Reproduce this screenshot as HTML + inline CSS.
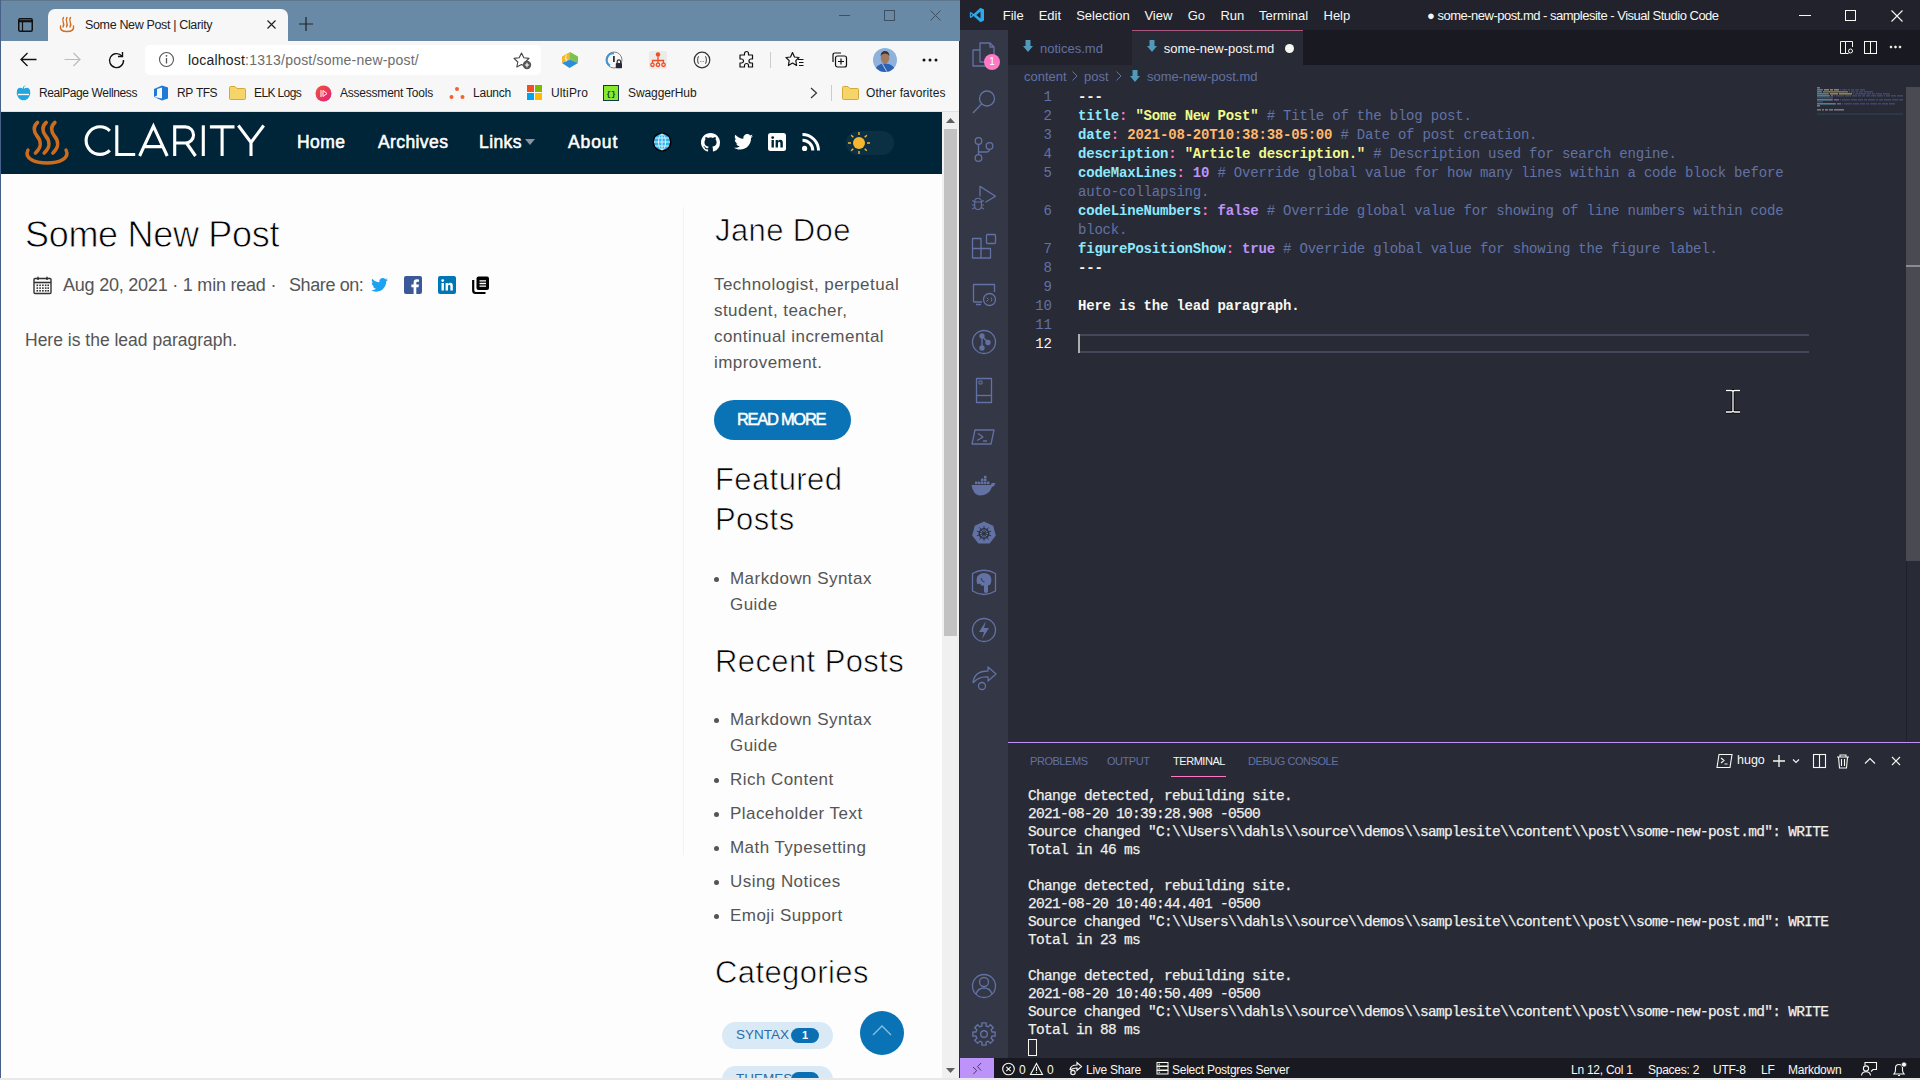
<!DOCTYPE html>
<html><head><meta charset="utf-8">
<style>
*{margin:0;padding:0;box-sizing:border-box}
html,body{width:1920px;height:1080px;overflow:hidden;background:#fff}
body{position:relative;font-family:"Liberation Sans",sans-serif}
.a{position:absolute;white-space:nowrap}
svg{position:absolute;overflow:visible}
/* EDGE */
#edge{position:absolute;left:0;top:0;width:960px;height:1080px;background:#f7f7f7;overflow:hidden}
#etitle{position:absolute;left:0;top:0;width:960px;height:41px;background:#688aa6;border-top:1px solid #5f7589}
#etab{position:absolute;left:48px;top:9px;width:240px;height:32px;background:#f7f7f7;border-radius:7px 7px 0 0}
#addr{position:absolute;left:145px;top:45px;width:396px;height:30px;background:#fff;border-radius:5px}
.bm{position:absolute;top:85px;font-size:12px;color:#1b1b1b;height:16px;line-height:16px}
#page{position:absolute;left:1px;top:112px;width:941px;height:966px;background:#fdfdfd;overflow:hidden}
#hdr{position:absolute;left:0;top:0;width:941px;height:62px;background:#002538}
.nav{position:absolute;top:20px;font-size:17.5px;font-weight:normal;color:#fff;letter-spacing:0.4px;-webkit-text-stroke:0.55px #fff}
#sb{position:absolute;left:942px;top:112px;width:17px;height:966px;background:#f0f0f0}
/* VSCODE */
#vs{position:absolute;left:960px;top:0;width:960px;height:1080px;background:#282a36;overflow:hidden}
#vtitle{position:absolute;left:0;top:0;width:960px;height:30px;background:#21222c}
.menu{position:absolute;top:8px;font-size:13px;color:#f8f8f2}
#act{position:absolute;left:0;top:30px;width:48px;height:1028px;background:#343746}
#tabs{position:absolute;left:48px;top:30px;width:912px;height:35px;background:#191a21}
.mono{font-family:"Liberation Mono",monospace}
#code{font-size:14px;letter-spacing:-0.2px;line-height:19px;font-weight:bold;color:#f8f8f2}
#lnum{text-align:right;font-size:14px;line-height:19px;color:#6272a4}
#panel{position:absolute;left:48px;top:742px;width:912px;height:316px;background:#282a36;border-top:1px solid #bd93f9}
#term{font-size:14.5px;letter-spacing:-0.7px;line-height:18px;color:#f0f0ea;font-weight:normal;-webkit-text-stroke:0.25px #f0f0ea}
#status{position:absolute;left:0;top:1058px;width:960px;height:20px;background:#191a21}
.st{position:absolute;top:3px;font-size:12px;color:#f8f8f2;letter-spacing:-0.25px}
#taskline{position:absolute;left:0;top:1078px;width:1920px;height:2px;background:#e8e8e8}

.k{color:#8be9fd}.p{color:#ff79c6}.s{color:#f1fa8c}.o{color:#ffb86c}.n{color:#bd93f9}.c{color:#6272a4;font-weight:normal}.w{color:#f8f8f2}
.pt{font-size:11px;color:#6272a4;letter-spacing:-0.45px}

.sh{font-size:31px;color:#000;line-height:36px;letter-spacing:0.4px;-webkit-text-stroke:0.7px #fdfdfd}
.sbt{font-size:17px;color:#555;line-height:26px;letter-spacing:0.45px}
.li{position:relative;padding-left:16px;margin-bottom:8px}
.bul{position:absolute;left:0px;top:11px;width:5px;height:5px;border-radius:3px;background:#555}
</style></head><body>


<div id="edge">
  <div id="etitle"></div>
  <div class="a" style="left:0;top:0;width:1px;height:1080px;background:#46608a"></div>
  <!-- tab actions icon -->
  <svg style="left:18px;top:18px" width="15" height="14" viewBox="0 0 15 14"><rect x="0.75" y="0.75" width="13.5" height="12.5" rx="1.5" fill="none" stroke="#111" stroke-width="1.5"/><path d="M0.75 3.2 H14.25" stroke="#111" stroke-width="2.2"/><path d="M4.5 3 V13" stroke="#111" stroke-width="1.2"/></svg>
  <div id="etab"></div>
  <!-- favicon steam -->
  <svg style="left:58px;top:16px" width="18" height="18" viewBox="0 0 18 18" fill="none" stroke="#cf6d22" stroke-width="1.4" stroke-linecap="round">
    <path d="M5.5 1.5 Q4 3.5 5.2 6 Q6.4 8.5 5 11"/><path d="M9 1.5 Q7.5 3.5 8.7 6 Q9.9 8.5 8.5 11"/><path d="M12.5 1.5 Q11 3.5 12.2 6 Q13.4 8.5 12 11"/>
    <path d="M2.5 10 Q1.5 15.5 9 15.5 Q16.5 15.5 15.5 10"/>
  </svg>
  <div class="a" id="tabt" style="left:85px;top:18px;font-size:12.5px;letter-spacing:-0.35px;color:#222">Some New Post | Clarity</div>
  <svg style="left:267px;top:20px" width="9" height="9" viewBox="0 0 9 9"><path d="M0.5 0.5 L8.5 8.5 M8.5 0.5 L0.5 8.5" stroke="#222" stroke-width="1.2"/></svg>
  <svg style="left:299px;top:17px" width="14" height="14" viewBox="0 0 14 14"><path d="M7 0 V14 M0 7 H14" stroke="#222" stroke-width="1.2"/></svg>
  <!-- window controls -->
  <div class="a" style="left:839px;top:15px;width:11px;height:1px;background:#3d4f60"></div>
  <div class="a" style="left:884px;top:10px;width:11px;height:11px;border:1px solid #3d4f60"></div>
  <svg style="left:930px;top:10px" width="11" height="11" viewBox="0 0 11 11"><path d="M0.5 0.5 L10.5 10.5 M10.5 0.5 L0.5 10.5" stroke="#3d4f60" stroke-width="1"/></svg>

  <!-- toolbar -->
  <svg style="left:20px;top:52px" width="17" height="15" viewBox="0 0 17 15"><path d="M16.5 7.5 H1.5 M7.5 1 L1 7.5 L7.5 14" stroke="#111" stroke-width="1.3" fill="none"/></svg>
  <svg style="left:64px;top:52px" width="17" height="15" viewBox="0 0 17 15"><path d="M0.5 7.5 H15.5 M9.5 1 L16 7.5 L9.5 14" stroke="#bbb" stroke-width="1.2" fill="none"/></svg>
  <svg style="left:108px;top:51px" width="17" height="17" viewBox="0 0 17 17"><path d="M13.8 5 A7 7 0 1 0 15.5 9" stroke="#111" stroke-width="1.4" fill="none"/><path d="M14.5 1 V5.5 H10" stroke="#111" stroke-width="1.4" fill="none"/></svg>
  <div id="addr"></div>
  <svg style="left:158px;top:51px" width="17" height="17" viewBox="0 0 17 17"><circle cx="8.5" cy="8.5" r="7" fill="none" stroke="#555" stroke-width="1.1"/><path d="M8.5 7 V12.5" stroke="#555" stroke-width="1.3"/><circle cx="8.5" cy="4.8" r="0.9" fill="#555"/></svg>
  <div class="a" id="url" style="left:188px;top:52px;font-size:14px;letter-spacing:0.2px;color:#222">localhost<span style="color:#6d6d6d">:1313/post/some-new-post/</span></div>
  <svg style="left:513px;top:52px" width="20" height="18" viewBox="0 0 20 18"><path d="M8.5 1 L10.8 5.8 L16 6.4 L12.2 10 L13.2 15 L8.5 12.5 L3.8 15 L4.8 10 L1 6.4 L6.2 5.8 Z" fill="none" stroke="#444" stroke-width="1.1" stroke-linejoin="round"/><circle cx="14" cy="13" r="4.2" fill="#555"/><path d="M14 10.8 V15.2 M11.8 13 H16.2" stroke="#fff" stroke-width="1.1"/></svg>
  <!-- extension icons -->
  <svg style="left:561px;top:51px" width="18" height="18" viewBox="0 0 18 18"><path d="M9 1 L1 5.5 V12 L9 8.5 Z" fill="#f2b727"/><path d="M9 1 L17 5.5 V12 L9 8.5 Z" fill="#7cc24a"/><path d="M1 12 L9 8.5 L17 12 L8.5 17 Z" fill="#2b8fd6"/><path d="M5.5 4 L4 8 H6 L5 10.5" stroke="#fff" stroke-width="0.8" fill="none"/></svg>
  <svg style="left:605px;top:51px" width="18" height="18" viewBox="0 0 18 18"><circle cx="9" cy="9" r="8" fill="none" stroke="#777" stroke-width="0.9"/><path d="M9 2.5 A6.5 6.5 0 0 0 5 14.5" fill="none" stroke="#3b95dc" stroke-width="1.8"/><rect x="8" y="5" width="1.8" height="6" fill="#333"/><rect x="10.8" y="12" width="6.2" height="5.2" rx="0.8" fill="#2a2a35"/><path d="M12.2 12 V10.6 A1.7 1.7 0 0 1 15.6 10.6 V12" stroke="#2a2a35" fill="none" stroke-width="1.2"/></svg>
  <svg style="left:649px;top:51px" width="18" height="18" viewBox="0 0 18 18" fill="none" stroke="#f04e23" stroke-width="1.3"><rect x="0" y="0" width="18" height="18" rx="2" fill="#ebebeb" stroke="none"/><circle cx="9" cy="3.5" r="2.2" fill="#f04e23" stroke="none"/><path d="M9 5.5 V9 M3.5 12 V9.5 H14.5 V12 M9 9.5 V12"/><circle cx="3.5" cy="13.8" r="1.7"/><circle cx="9" cy="13.8" r="1.7"/><circle cx="14.5" cy="13.8" r="1.7"/></svg>
  <svg style="left:693px;top:51px" width="18" height="18" viewBox="0 0 18 18"><circle cx="9" cy="9" r="7.8" fill="none" stroke="#333" stroke-width="1.2"/><path d="M6 5.5 Q4.8 5.5 4.8 7 V8.2 Q4.8 9 4 9 Q4.8 9 4.8 9.8 V11 Q4.8 12.5 6 12.5 M12 5.5 Q13.2 5.5 13.2 7 V8.2 Q13.2 9 14 9 Q13.2 9 13.2 9.8 V11 Q13.2 12.5 12 12.5" fill="none" stroke="#333" stroke-width="0.9"/><path d="M7.3 10.5 H7.9 M8.7 10.5 H9.3 M10.1 10.5 H10.7" stroke="#555" stroke-width="0.9"/></svg>
  <svg style="left:738px;top:51px" width="18" height="18" viewBox="0 0 18 18"><path d="M6.5 2.5 A2 2 0 0 1 10.5 2.5 V4 H14.5 V8 H13 A2 2 0 0 0 13 12 H14.5 V16 H10.5 V14.5 A2 2 0 0 0 6.5 14.5 V16 H2 V12 H3.5 A2 2 0 0 0 3.5 8 H2 V4 H6.5 Z" fill="none" stroke="#111" stroke-width="1.2" stroke-linejoin="round"/></svg>
  <div class="a" style="left:770px;top:52px;width:1px;height:16px;background:#ccc"></div>
  <svg style="left:785px;top:51px" width="19" height="18" viewBox="0 0 19 18"><path d="M7.5 1.5 L9.5 6 L14 6.5 L10.8 9.6 L11.6 14.5 L7.5 12 L3.4 14.5 L4.2 9.6 L1 6.5 L5.5 6 Z" fill="none" stroke="#111" stroke-width="1.2" stroke-linejoin="round"/><path d="M13 8.5 H18.5 M14 11.5 H18.5 M14 14.5 H18.5" stroke="#111" stroke-width="1.1"/></svg>
  <svg style="left:830px;top:51px" width="18" height="18" viewBox="0 0 18 18" fill="none" stroke="#111" stroke-width="1.2"><path d="M3 11 V4 Q3 2 5 2 H11"/><rect x="5.5" y="5" width="11" height="11" rx="2"/><path d="M11 7.5 V13.5 M8 10.5 H14"/></svg>
  <svg style="left:873px;top:48px" width="24" height="24" viewBox="0 0 24 24"><defs><clipPath id="avc"><circle cx="12" cy="12" r="12"/></clipPath></defs><g clip-path="url(#avc)"><rect width="24" height="24" fill="#8eb2dc"/><ellipse cx="12" cy="10" rx="4.3" ry="5.5" fill="#a07a62"/><path d="M7.5 8 Q8 3 12 3 Q16 3 16.5 8 Q15 5.5 12 5.5 Q9 5.5 7.5 8 Z" fill="#3b3634"/><path d="M1 24 Q3 15.5 12 15.5 Q21 15.5 23 24 Z" fill="#2c62b4"/><path d="M9.5 16 L14 24" stroke="#d8e0ea" stroke-width="0.8"/></g></svg>
  <svg style="left:922px;top:58px" width="16" height="4" viewBox="0 0 16 4"><circle cx="2" cy="2" r="1.5" fill="#111"/><circle cx="8" cy="2" r="1.5" fill="#111"/><circle cx="14" cy="2" r="1.5" fill="#111"/></svg>

  <!-- bookmarks -->
  <svg style="left:16px;top:85px" width="15" height="16" viewBox="0 0 15 16"><path d="M7.5 4 Q3 1 1 5 Q0 9 2 12 Q4 16 7.5 15 Q11 16 13 12 Q15 9 14 5 Q12 1 7.5 4 Z" fill="#22a6e0"/><path d="M2 9.5 H13" stroke="#fff" stroke-width="1.3"/><path d="M7.5 4 Q7 1.5 9 0.5" stroke="#22a6e0" stroke-width="1" fill="none"/></svg>
  <div class="bm a" id="b0" style="letter-spacing:-0.38px;left:39px">RealPage Wellness</div>
  <svg style="left:153px;top:85px" width="16" height="16" viewBox="0 0 16 16"><path d="M1 4 L9 0.5 L15 2.5 V13.5 L9 15.5 L1 12 L9 13.5 V2.5 L4 4 V10.5 L1 12 Z" fill="#1e7ad6"/></svg>
  <div class="bm a" id="b1" style="left:177px;letter-spacing:-0.3px">RP</div><div class="bm a" style="left:196px;letter-spacing:-0.6px">TFS</div>
  <svg style="left:229px;top:86px" width="17" height="14" viewBox="0 0 17 14"><path d="M0.5 1.5 Q0.5 0.5 1.5 0.5 H6 L8 2.5 H15.5 Q16.5 2.5 16.5 3.5 V12.5 Q16.5 13.5 15.5 13.5 H1.5 Q0.5 13.5 0.5 12.5 Z" fill="#f5d46a" stroke="#d4a93a" stroke-width="1"/></svg>
  <div class="bm a" id="b2" style="letter-spacing:-0.62px;left:254px">ELK Logs</div>
  <svg style="left:315px;top:85px" width="17" height="17" viewBox="0 0 17 17"><defs><linearGradient id="gr1" x1="0" y1="0" x2="1" y2="1"><stop offset="0" stop-color="#f0553a"/><stop offset="1" stop-color="#e0207a"/></linearGradient></defs><circle cx="8.5" cy="8.5" r="8" fill="url(#gr1)"/><path d="M6 5 V12 M8 5.5 L12 8.5 L8 11.5 Z" stroke="#fff" fill="none" stroke-width="1"/></svg>
  <div class="bm a" id="b3" style="letter-spacing:-0.22px;left:340px">Assessment Tools</div>
  <svg style="left:449px;top:86px" width="16" height="14" viewBox="0 0 16 14"><circle cx="8" cy="3" r="2" fill="#f0622e"/><circle cx="2.5" cy="11" r="2" fill="#f0622e"/><circle cx="13.5" cy="11" r="2" fill="#f0622e"/></svg>
  <div class="bm a" id="b4" style="letter-spacing:-0.23px;left:473px">Launch</div>
  <svg style="left:527px;top:85px" width="15" height="15" viewBox="0 0 15 15"><rect x="0" y="0" width="7" height="7" fill="#f25022"/><rect x="8" y="0" width="7" height="7" fill="#7fba00"/><rect x="0" y="8" width="7" height="7" fill="#00a4ef"/><rect x="8" y="8" width="7" height="7" fill="#ffb900"/></svg>
  <div class="bm a" id="b5" style="letter-spacing:0.14px;left:551px">UltiPro</div>
  <svg style="left:603px;top:85px" width="16" height="16" viewBox="0 0 16 16"><rect x="0.5" y="0.5" width="15" height="15" fill="#85ea2d" stroke="#173647" stroke-width="1"/><text x="8" y="11" font-size="8" text-anchor="middle" fill="#173647" font-family="Liberation Mono" font-weight="bold">{}</text></svg>
  <div class="bm a" id="b6" style="letter-spacing:-0.09px;left:628px">SwaggerHub</div>
  <svg style="left:810px;top:87px" width="8" height="12" viewBox="0 0 8 12"><path d="M1 1 L6.5 6 L1 11" stroke="#333" stroke-width="1.2" fill="none"/></svg>
  <div class="a" style="left:831px;top:85px;width:1px;height:16px;background:#ccc"></div>
  <svg style="left:842px;top:86px" width="17" height="14" viewBox="0 0 17 14"><path d="M0.5 1.5 Q0.5 0.5 1.5 0.5 H6 L8 2.5 H15.5 Q16.5 2.5 16.5 3.5 V12.5 Q16.5 13.5 15.5 13.5 H1.5 Q0.5 13.5 0.5 12.5 Z" fill="#f5d46a" stroke="#d4a93a" stroke-width="1"/></svg>
  <div class="bm a" id="b7" style="letter-spacing:0.05px;left:866px">Other favorites</div>
  <div class="a" style="left:1px;top:111px;width:958px;height:1px;background:#e0e0e0"></div>

  
  <div id="page">
    <div id="hdr">
      <svg style="left:19px;top:4px" width="56" height="54" viewBox="0 0 56 54" fill="none" stroke="#cd6c1f" stroke-width="3.6" stroke-linecap="round">
        <path d="M17.5 6.5 C13 10 13.5 16 17 20 C21 24.5 22 31 15.5 37"/><path d="M26.2 6.5 C21.7 10 22.2 16 25.7 20 C29.7 24.5 30.7 31 24.2 37"/><path d="M34.9 6.5 C30.4 10 30.9 16 34.4 20 C38.4 24.5 39.4 31 32.9 37"/>
        <path d="M8 34 C4 42 14 47 27 47 C40 47 50 42 46 34" stroke-width="3.4"/>
      </svg>
      <svg style="left:-1px;top:-112px" width="300" height="180" viewBox="0 0 300 180" fill="none" stroke="#fff" stroke-width="3.1">
        <path d="M109.8 130.8 A 13.9 13.8 0 1 0 109.8 150.4"/>
        <path d="M116.8 125.3 V154.5 H135.2"/>
        <path d="M139.6 156 L153.4 126.2 L167.2 156 M144 146.6 H162.8"/>
        <path d="M174.7 156 V126.9 H185.5 A 8.05 8.05 0 0 1 185.5 143 H174.7 M186.5 143 L195.5 156"/>
        <path d="M203.3 125.3 V156"/>
        <path d="M209.9 126.9 H234.5 M222.1 126.9 V156"/>
        <path d="M238.3 125.5 L251 142.5 L263.7 125.5 M251 142.5 V156"/>
      </svg>
      <div class="nav" id="n1" style="left:296px">Home</div>
      <div class="nav" id="n2" style="left:377px">Archives</div>
      <div class="nav" id="n3" style="left:478px">Links</div>
      <svg style="left:524px;top:27px" width="10" height="6" viewBox="0 0 10 6"><path d="M0 0 H10 L5 6 Z" fill="#8a949c"/></svg>
      <div class="nav" id="n4" style="left:567px;letter-spacing:0.9px">About</div>
      <!-- globe -->
      <svg style="left:651px;top:20px" width="20" height="20" viewBox="0 0 20 20"><circle cx="10" cy="10" r="9.5" fill="#000"/><circle cx="10" cy="10" r="8" fill="#2fb5ee"/><g stroke="#e8f7ff" stroke-width="0.9" fill="none"><ellipse cx="10" cy="10" rx="3.5" ry="8"/><path d="M10 2 V18 M2 10 H18 M3 6 H17 M3 14 H17"/></g></svg>
      <!-- github -->
      <svg style="left:700px;top:21px" width="19" height="19" viewBox="0 0 16 16"><path fill="#fff" d="M8 0C3.58 0 0 3.58 0 8c0 3.54 2.29 6.53 5.47 7.59.4.07.55-.17.55-.38 0-.19-.01-.82-.01-1.49-2.01.37-2.53-.49-2.69-.94-.09-.23-.48-.94-.82-1.13-.28-.15-.68-.52-.01-.53.63-.01 1.08.58 1.23.82.72 1.21 1.87.87 2.33.66.07-.52.28-.87.51-1.07-1.78-.2-3.64-.89-3.640-3.95 0-.87.31-1.59.82-2.15-.08-.2-.36-1.02.08-2.12 0 0 .67-.21 2.2.82.64-.18 1.32-.27 2-.27.68 0 1.36.09 2 .27 1.53-1.04 2.2-.82 2.2-.82.44 1.1.16 1.92.08 2.12.51.56.82 1.27.82 2.15 0 3.07-1.87 3.75-3.65 3.95.29.25.54.73.54 1.48 0 1.07-.01 1.93-.01 2.2 0 .21.15.46.55.38A8.013 8.013 0 0016 8c0-4.42-3.58-8-8-8z"/></svg>
      <!-- twitter -->
      <svg style="left:733px;top:22px" width="19" height="16" viewBox="0 0 24 20"><path fill="#fff" d="M24 2.4c-.9.4-1.8.6-2.8.8 1-.6 1.8-1.6 2.2-2.7-1 .6-2 1-3.1 1.2C19.4.6 18.1 0 16.7 0c-2.7 0-4.9 2.2-4.9 4.9 0 .4 0 .8.1 1.1C7.8 5.8 4.1 3.9 1.7.9c-.4.7-.7 1.6-.7 2.5 0 1.7.9 3.2 2.2 4.1-.8 0-1.6-.2-2.2-.6v.1c0 2.4 1.7 4.4 3.9 4.8-.4.1-.8.2-1.3.2-.3 0-.6 0-.9-.1.6 2 2.4 3.4 4.6 3.4-1.7 1.3-3.8 2.1-6.1 2.1-.4 0-.8 0-1.2-.1 2.2 1.4 4.8 2.2 7.5 2.2 9.1 0 14-7.5 14-14v-.6c1-.7 1.8-1.6 2.5-2.5z"/></svg>
      <!-- linkedin -->
      <svg style="left:767px;top:21px" width="18" height="18" viewBox="0 0 18 18"><rect width="18" height="18" rx="2.5" fill="#fff"/><rect x="3.5" y="7" width="2.4" height="7.5" fill="#002538"/><circle cx="4.7" cy="4.6" r="1.4" fill="#002538"/><path d="M7.6 7 H9.9 V8.2 Q10.6 6.8 12.4 6.8 Q14.8 6.8 14.8 9.8 V14.5 H12.4 V10.3 Q12.4 8.8 11.2 8.8 Q10 8.8 10 10.3 V14.5 H7.6 Z" fill="#002538"/></svg>
      <!-- rss -->
      <svg style="left:801px;top:21px" width="18" height="18" viewBox="0 0 18 18"><circle cx="2.6" cy="15.4" r="2.6" fill="#fff"/><path d="M0.5 7.2 A10.3 10.3 0 0 1 10.8 17.5" stroke="#fff" stroke-width="3" fill="none"/><path d="M0.5 1.5 A16 16 0 0 1 16.5 17.5" stroke="#fff" stroke-width="3" fill="none"/></svg>
      <!-- toggle -->
      <div class="a" style="left:845px;top:19px;width:48px;height:24px;border-radius:12px;background:#0b3043"></div>
      <svg style="left:846px;top:19px" width="24" height="24" viewBox="0 0 24 24"><g stroke="#f5b730" stroke-width="1.4"><path d="M12 1 V4 M12 20 V23 M1 12 H4 M20 12 H23 M4.2 4.2 L6.3 6.3 M17.7 17.7 L19.8 19.8 M4.2 19.8 L6.3 17.7 M17.7 6.3 L19.8 4.2"/></g><circle cx="12" cy="12" r="6" fill="#f5b730"/></svg>
    </div>

    <!-- article -->
    <div class="a" id="ptitle" style="left:24px;top:102px;font-size:36px;letter-spacing:-0.3px;-webkit-text-stroke:0.8px #fdfdfd;color:#000">Some New Post</div>
    <svg style="left:32px;top:164px" width="19" height="19" viewBox="0 0 19 19"><rect x="1" y="2.5" width="17" height="15" rx="1" fill="none" stroke="#333" stroke-width="1.4"/><path d="M1 6.5 H18" stroke="#333" stroke-width="1.6"/><path d="M5 0.8 V4 M14 0.8 V4" stroke="#333" stroke-width="1.5"/><g fill="#333"><rect x="3.5" y="8.5" width="1.6" height="1.6"/><rect x="6.3" y="8.5" width="1.6" height="1.6"/><rect x="9.1" y="8.5" width="1.6" height="1.6"/><rect x="11.9" y="8.5" width="1.6" height="1.6"/><rect x="14.4" y="8.5" width="1.6" height="1.6"/><rect x="3.5" y="11.3" width="1.6" height="1.6"/><rect x="6.3" y="11.3" width="1.6" height="1.6"/><rect x="9.1" y="11.3" width="1.6" height="1.6"/><rect x="11.9" y="11.3" width="1.6" height="1.6"/><rect x="14.4" y="11.3" width="1.6" height="1.6"/><rect x="3.5" y="14" width="1.6" height="1.6"/><rect x="6.3" y="14" width="1.6" height="1.6"/><rect x="9.1" y="14" width="1.6" height="1.6"/><rect x="11.9" y="14" width="1.6" height="1.6"/><rect x="14.4" y="14" width="1.6" height="1.6"/></g></svg>
    <div class="a" id="meta" style="left:62px;top:163px;font-size:18px;letter-spacing:-0.22px;color:#555">Aug 20, 2021 · 1 min read ·</div>
    <div class="a" id="share" style="left:288px;top:163px;font-size:18px;letter-spacing:-0.4px;color:#555">Share on:</div>
    <svg style="left:370px;top:166px" width="17" height="14" viewBox="0 0 24 20"><path fill="#1da1f2" d="M24 2.4c-.9.4-1.8.6-2.8.8 1-.6 1.8-1.6 2.2-2.7-1 .6-2 1-3.1 1.2C19.4.6 18.1 0 16.7 0c-2.7 0-4.9 2.2-4.9 4.9 0 .4 0 .8.1 1.1C7.8 5.8 4.1 3.9 1.7.9c-.4.7-.7 1.6-.7 2.5 0 1.7.9 3.2 2.2 4.1-.8 0-1.6-.2-2.2-.6v.1c0 2.4 1.7 4.4 3.9 4.8-.4.1-.8.2-1.3.2-.3 0-.6 0-.9-.1.6 2 2.4 3.4 4.6 3.4-1.7 1.3-3.8 2.1-6.1 2.1-.4 0-.8 0-1.2-.1 2.2 1.4 4.8 2.2 7.5 2.2 9.1 0 14-7.5 14-14v-.6c1-.7 1.8-1.6 2.5-2.5z"/></svg>
    <svg style="left:403px;top:164px" width="18" height="18" viewBox="0 0 18 18"><rect width="18" height="18" rx="2" fill="#3b5998"/><path d="M12.3 18 V11.2 H14.5 L14.9 8.6 H12.3 V7 Q12.3 5.8 13.5 5.8 H15 V3.5 Q14 3.3 12.8 3.3 Q9.6 3.3 9.6 6.6 V8.6 H7.4 V11.2 H9.6 V18 Z" fill="#fff"/></svg>
    <svg style="left:437px;top:164px" width="18" height="18" viewBox="0 0 18 18"><rect width="18" height="18" rx="2" fill="#0077b5"/><rect x="3.5" y="7" width="2.4" height="7.5" fill="#fff"/><circle cx="4.7" cy="4.6" r="1.4" fill="#fff"/><path d="M7.6 7 H9.9 V8.2 Q10.6 6.8 12.4 6.8 Q14.8 6.8 14.8 9.8 V14.5 H12.4 V10.3 Q12.4 8.8 11.2 8.8 Q10 8.8 10 10.3 V14.5 H7.6 Z" fill="#fff"/></svg>
    <svg style="left:471px;top:164px" width="18" height="18" viewBox="0 0 18 18"><path d="M1.2 4 V14.5 Q1.2 17 3.7 17 H13.5" fill="none" stroke="#000" stroke-width="2.2"/><rect x="4.5" y="0.5" width="12.5" height="13.5" rx="2" fill="#000"/><path d="M7.5 4.8 H14 M7.5 7.5 H14 M7.5 10.2 H14" stroke="#fff" stroke-width="1.3"/></svg>
    <div class="a" id="lead" style="left:24px;top:218px;font-size:17.5px;color:#555">Here is the lead paragraph.</div>

    <!-- sidebar -->
    <div class="a" style="left:682px;top:95px;width:1px;height:648px;background:#f2f2f2"></div>
    <div class="a sh" id="jane" style="left:714px;top:101px">Jane Doe</div>
    <div class="a sbt" id="bio" style="left:713px;top:160px">Technologist, perpetual<br>student, teacher,<br>continual incremental<br>improvement.</div>
    <div class="a" style="left:713px;top:288px;width:137px;height:40px;border-radius:20px;background:#0a73b5"></div>
    <div class="a" id="readmore" style="left:736px;top:298px;font-size:16.5px;letter-spacing:-1.3px;font-weight:normal;-webkit-text-stroke:0.5px #fff;color:#fff">READ MORE</div>
    <div class="a sh" id="feat" style="left:714px;top:348px;line-height:40px">Featured<br>Posts</div>
    <div class="a sbt" style="left:713px;top:454px">
      <div class="li"><span class="bul"></span>Markdown Syntax<br>Guide</div>
    </div>
    <div class="a sh" id="recent" style="left:714px;top:532px">Recent Posts</div>
    <div class="a sbt" style="left:713px;top:595px">
      <div class="li"><span class="bul"></span>Markdown Syntax<br>Guide</div>
      <div class="li"><span class="bul"></span>Rich Content</div>
      <div class="li"><span class="bul"></span>Placeholder Text</div>
      <div class="li"><span class="bul"></span>Math Typesetting</div>
      <div class="li"><span class="bul"></span>Using Notices</div>
      <div class="li"><span class="bul"></span>Emoji Support</div>
    </div>
    <div class="a sh" id="cats" style="left:714px;top:843px">Categories</div>
    <div class="a" style="left:721px;top:910px;width:111px;height:27px;border-radius:14px;background:#d9eaf6"></div>
    <div class="a" id="syn" style="left:735px;top:915px;font-size:13.5px;color:#2a6ca8">SYNTAX</div>
    <div class="a" style="left:790px;top:916px;width:28px;height:15px;border-radius:8px;background:#0a70b3;color:#fff;font-size:11px;font-weight:bold;line-height:15px;text-align:center">1</div>
    <div class="a" style="left:721px;top:954px;width:111px;height:27px;border-radius:14px;background:#d9eaf6"></div>
    <div class="a" style="left:735px;top:959px;font-size:13.5px;color:#2a6ca8">THEMES</div>
    <div class="a" style="left:790px;top:960px;width:28px;height:15px;border-radius:8px;background:#0a70b3"></div>
    <!-- to top -->
    <div class="a" style="left:859px;top:899px;width:44px;height:44px;border-radius:22px;background:#0a73b5"></div>
    <svg style="left:871px;top:912px" width="20" height="12" viewBox="0 0 20 12"><path d="M1 11 L10 2 L19 11" stroke="#8cc0e3" stroke-width="1.3" fill="none"/></svg>
  </div>

  <div id="sb"></div>
  <div class="a" style="left:944px;top:129px;width:13px;height:507px;background:#c2c2c2"></div>
  <svg style="left:946px;top:118px" width="9" height="5" viewBox="0 0 9 5"><path d="M0 5 L4.5 0 L9 5 Z" fill="#606060"/></svg>
  <svg style="left:946px;top:1068px" width="9" height="5" viewBox="0 0 9 5"><path d="M0 0 L4.5 5 L9 0 Z" fill="#606060"/></svg>
  <div class="a" style="left:959px;top:41px;width:1px;height:1039px;background:#2a2b3a"></div>
</div>

<div id="vs">
  <div id="vtitle"></div>
  <!-- vscode logo -->
  <svg style="left:9px;top:7px" width="16" height="16" viewBox="0 0 16 16"><path d="M11.5 0.8 L15 2.4 V13.6 L11.5 15.2 L4.6 9 L1.9 11 L0.8 10.4 V5.6 L1.9 5 L4.6 7 Z M11.5 4.6 L7.3 8 L11.5 11.4 Z M1.9 6.6 V9.4 L3.4 8 Z" fill="#2ea8ec"/></svg>
  <div class="menu a" style="left:42.7px">File</div>
  <div class="menu a" style="left:78.7px">Edit</div>
  <div class="menu a" style="left:116.2px">Selection</div>
  <div class="menu a" style="left:184.4px">View</div>
  <div class="menu a" style="left:227.7px">Go</div>
  <div class="menu a" style="left:260.4px">Run</div>
  <div class="menu a" style="left:299px">Terminal</div>
  <div class="menu a" style="left:363.5px">Help</div>
  <div class="menu a" id="wtitle" style="left:467px;top:8px;letter-spacing:-0.5px">&#9679; some-new-post.md - samplesite - Visual Studio Code</div>
  <!-- window controls -->
  <div class="a" style="left:839px;top:15px;width:12px;height:1px;background:#f8f8f2"></div>
  <div class="a" style="left:885px;top:10px;width:11px;height:11px;border:1px solid #f8f8f2"></div>
  <svg style="left:931px;top:10px" width="12" height="12" viewBox="0 0 12 12"><path d="M0.5 0.5 L11.5 11.5 M11.5 0.5 L0.5 11.5" stroke="#f8f8f2" stroke-width="1.1"/></svg>

  <div id="act"></div>
  <svg id="acticons" style="left:0;top:0" width="48" height="1058" viewBox="0 0 48 1058" fill="none" stroke="#6272a4" stroke-width="1.3" stroke-linejoin="round">
    <!-- explorer -->
    <path d="M20 43 H30 L34 47 V62 H20 Z M30 43 V47 H34"/>
    <path d="M20 50 H13 V66 H26 V62"/>
    <!-- search -->
    <circle cx="27" cy="98.5" r="7.5"/><path d="M21.5 104 L13 113"/>
    <!-- scm -->
    <circle cx="18.5" cy="141" r="3.3"/><circle cx="29.5" cy="146" r="3.3"/><circle cx="18.5" cy="158" r="3.3"/>
    <path d="M18.5 144.3 V154.7 M29.5 149.3 Q29.5 152 26 152 H18.5"/>
    <!-- debug -->
    <path d="M20 196.4 V186.4 L35.5 196.2 L25.5 202.3"/>
    <path d="M14.7 202 Q14.7 198.2 18 198.2 Q21.4 198.2 21.4 202 V206 Q21.4 209.5 18 209.5 Q14.7 209.5 14.7 206 Z M14.7 202 H21.4 M12.3 200.5 L14.7 202 M23.8 200.5 L21.4 202 M12 205 H14.7 M21.4 205 H24 M12.3 209 L14.7 207.5 M23.8 209 L21.4 207.5" stroke-width="1.1"/>
    <!-- extensions -->
    <path d="M12.5 238.5 H21 V248.5 H30.5 V258 H12.5 Z M12.5 248.5 H21 V258"/>
    <rect x="26.5" y="234.5" width="9" height="9" rx="1"/>
    <!-- remote explorer -->
    <path d="M13.5 302 V284.5 H34.5 V292 M13.5 302 H22 M16 304.5 H21"/>
    <circle cx="29.5" cy="299.5" r="6"/>
    <path d="M26.5 297.5 L28.5 299.5 L26.5 301.5 M31 297.5 Q33 299.5 31 301.5" stroke-width="1"/>
    <!-- gitlens / pull request -->
    <circle cx="24" cy="342" r="11.5"/>
    <circle cx="22" cy="336" r="2" fill="#6272a4"/><circle cx="28" cy="342.5" r="2" fill="#6272a4"/><circle cx="22" cy="348" r="2" fill="#6272a4"/>
    <path d="M22 336 V348 M22 336 L28 342.5"/>
    <!-- database -->
    <rect x="16.5" y="378.5" width="15" height="24"/><path d="M16.5 395.5 H31.5"/><rect x="19" y="381" width="3" height="3" stroke-width="1"/>
    <!-- powershell -->
    <path d="M15 430 L34 430 L31 444 L12 444 Z M18 433.5 L23 437 L17 440.5 M23 441 H27"/>
    <!-- docker -->
    <path d="M11.5 485 H30.5 Q32 481.5 35.5 483.5 Q34.5 486.5 32 487 Q29 495.5 20 495.5 Q13 495 11.5 485 Z" fill="#6272a4" stroke="none"/>
    <g fill="#6272a4" stroke="none"><rect x="15" y="481.6" width="2.5" height="2.5"/><rect x="18" y="481.6" width="2.5" height="2.5"/><rect x="21" y="481.6" width="2.5" height="2.5"/><rect x="24" y="481.6" width="2.5" height="2.5"/><rect x="27" y="481.6" width="2.5" height="2.5"/><rect x="21" y="478.6" width="2.5" height="2.5"/><rect x="24" y="478.6" width="2.5" height="2.5"/><rect x="24" y="475.8" width="2.5" height="2.5"/></g>
    <!-- kubernetes -->
    <path d="M24 521.5 L33.2 525.8 L35.8 535.5 L29.6 543.5 H18.4 L12.2 535.5 L14.8 525.8 Z" fill="#6272a4" stroke="none"/>
    <circle cx="24" cy="533.5" r="4.8" stroke="#2a2c3a" stroke-width="1.3"/>
    <circle cx="24" cy="533.5" r="1.3" fill="#2a2c3a" stroke="none"/>
    <path d="M24 526 V541 M16.9 531.2 L31.1 535.8 M19.5 539.5 L28.5 527.5 M28.5 539.5 L19.5 527.5 M16.9 535.8 L31.1 531.2" stroke="#2a2c3a" stroke-width="0.9"/>
    <!-- postgres -->
    <path d="M12.5 573.5 Q24 567 35.5 573.5 V591 Q24 598 12.5 591 Z"/>
    <path d="M17 577 Q21 571.5 27 573.5 Q32.5 575.5 31 583 Q30 586 28 585 V592 Q26 594 24 592 V585.5 Q21 586.5 20 583.5 Q17 586 16.5 581 Z" fill="#6272a4" stroke="none"/>
    <path d="M21 578 Q22 582 24.5 582" stroke="#343746" stroke-width="1"/>
    <!-- azure functions -->
    <circle cx="24" cy="630" r="11.5"/>
    <path d="M26 621 L19 632 H24 L22 639 L29 628 H24 Z" fill="#6272a4" stroke="none"/>
    <!-- live share -->
    <path d="M13 683 Q14 671 28 671 V667 L36 674 L28 681 V677 Q19 676 13 683" />
    <circle cx="22" cy="686" r="3.5"/>
    <!-- accounts -->
    <circle cx="24" cy="986" r="11.5"/><circle cx="24" cy="982" r="4.5"/><path d="M16 994 Q18 988 24 988 Q30 988 32 994"/>
    <!-- settings gear -->
    <path d="M21.99 1025.95 L21.84 1022.91 L26.16 1022.91 L26.01 1025.95 L28.27 1026.89 L30.32 1024.63 L33.37 1027.68 L31.11 1029.73 L32.05 1031.99 L35.09 1031.84 L35.09 1036.16 L32.05 1036.01 L31.11 1038.27 L33.37 1040.32 L30.32 1043.37 L28.27 1041.11 L26.01 1042.05 L26.16 1045.09 L21.84 1045.09 L21.99 1042.05 L19.73 1041.11 L17.68 1043.37 L14.63 1040.32 L16.89 1038.27 L15.95 1036.01 L12.91 1036.16 L12.91 1031.84 L15.95 1031.99 L16.89 1029.73 L14.63 1027.68 L17.68 1024.63 L19.73 1026.89 Z" stroke-width="1.4"/>
    <circle cx="24" cy="1034" r="3.3" stroke-width="1.4"/>
  </svg>
  <div class="a" style="left:24px;top:54px;width:16px;height:16px;border-radius:8px;background:#ff79c6;color:#fff;font-size:10px;line-height:16px;text-align:center">1</div>

  <div id="tabs"></div>
  <div class="a" style="left:48px;top:30px;width:124px;height:35px;background:#21222c"></div>
  <div class="a" style="left:172px;top:30px;width:171px;height:35px;background:#282a36;border-top:1px solid #a9577f"></div>
  <svg style="left:63px;top:40px" width="10" height="14" viewBox="0 0 10 14"><path d="M2.5 0 H7.5 V6 H10 L5 12 L0 6 H2.5 Z" fill="#519aba"/></svg>
  <div class="a" style="left:80px;top:41px;font-size:13px;color:#6272a4">notices.md</div>
  <svg style="left:187px;top:40px" width="10" height="14" viewBox="0 0 10 14"><path d="M2.5 0 H7.5 V6 H10 L5 12 L0 6 H2.5 Z" fill="#519aba"/></svg>
  <div class="a" style="left:203.7px;top:41px;font-size:13px;color:#f8f8f2">some-new-post.md</div>
  <div class="a" style="left:325px;top:44px;width:9px;height:9px;border-radius:5px;background:#f8f8f2"></div>
  <!-- editor actions -->
  <svg style="left:879px;top:39px" width="70" height="16" viewBox="0 0 70 16" fill="none" stroke="#f8f8f2" stroke-width="1">
    <path d="M6.5 2.5 H1.5 V14.5 H6.5 Z M6.5 2.5 H13.5 V8 M6.5 14.5 H9"/><circle cx="11.5" cy="12" r="2"/><path d="M10 13.5 L8.5 15"/>
    <rect x="25.5" y="2.5" width="12" height="12"/><path d="M31.5 2.5 V14.5"/>
    <circle cx="52" cy="8" r="0.9" fill="#f8f8f2"/><circle cx="56.5" cy="8" r="0.9" fill="#f8f8f2"/><circle cx="61" cy="8" r="0.9" fill="#f8f8f2"/>
  </svg>

  <!-- breadcrumbs -->
  <div class="a" style="left:64px;top:69px;font-size:13px;color:#6272a4">content</div>
  <svg style="left:111px;top:71px" width="8" height="10" viewBox="0 0 8 10"><path d="M1.5 0.5 L6 5 L1.5 9.5" stroke="#6272a4" fill="none" stroke-width="1"/></svg>
  <div class="a" style="left:124px;top:69px;font-size:13px;color:#6272a4">post</div>
  <svg style="left:155px;top:71px" width="8" height="10" viewBox="0 0 8 10"><path d="M1.5 0.5 L6 5 L1.5 9.5" stroke="#6272a4" fill="none" stroke-width="1"/></svg>
  <svg style="left:170px;top:70px" width="10" height="14" viewBox="0 0 10 14"><path d="M2.5 0 H7.5 V6 H10 L5 12 L0 6 H2.5 Z" fill="#519aba"/></svg>
  <div class="a" style="left:187px;top:69px;font-size:13px;color:#6272a4">some-new-post.md</div>

  <!-- line numbers -->
  <div id="lnum" class="mono a" style="left:48px;top:88px;width:44px">1<br>2<br>3<br>4<br>5<br>&nbsp;<br>6<br>&nbsp;<br>7<br>8<br>9<br>10<br>11<br><span style="color:#f8f8f2">12</span></div>
  <!-- current line border -->
  <div class="a" style="left:118px;top:334px;width:731px;height:19px;border-top:2px solid #44475a;border-bottom:2px solid #44475a"></div>
  <div class="a" style="left:118px;top:334px;width:2px;height:19px;background:#aeafad"></div>
  <div id="code" class="mono a" style="left:118px;top:88px"><span class="w">---</span><br><span class="k">title</span><span class="p">:</span> <span class="s">"Some New Post"</span> <span class="c"># Title of the blog post.</span><br><span class="k">date</span><span class="p">:</span> <span class="o">2021-08-20T10:38:38-05:00</span> <span class="c"># Date of post creation.</span><br><span class="k">description</span><span class="p">:</span> <span class="s">"Article description."</span> <span class="c"># Description used for search engine.</span><br><span class="k">codeMaxLines</span><span class="p">:</span> <span class="n">10</span> <span class="c"># Override global value for how many lines within a code block before</span><br><span class="c">auto-collapsing.</span><br><span class="k">codeLineNumbers</span><span class="p">:</span> <span class="n">false</span> <span class="c"># Override global value for showing of line numbers within code</span><br><span class="c">block.</span><br><span class="k">figurePositionShow</span><span class="p">:</span> <span class="n">true</span> <span class="c"># Override global value for showing the figure label.</span><br><span class="w">---</span><br><br><span class="w">Here is the lead paragraph.</span></div>

  <!-- minimap -->
  <svg style="left:857px;top:87px;opacity:0.6" width="90" height="30" viewBox="0 0 90 30"><rect x="0" y="0" width="3" height="1.6" fill="#a9aab0"/><rect x="0" y="2" width="5" height="1.6" fill="#6fb8d0"/><rect x="5" y="2" width="1" height="1.6" fill="#c06a9e"/><rect x="7" y="2" width="5" height="1.6" fill="#c0c47a"/><rect x="13" y="2" width="3" height="1.6" fill="#c0c47a"/><rect x="17" y="2" width="5" height="1.6" fill="#c0c47a"/><rect x="23" y="2" width="1" height="1.6" fill="#4e5a86"/><rect x="25" y="2" width="5" height="1.6" fill="#4e5a86"/><rect x="31" y="2" width="2" height="1.6" fill="#4e5a86"/><rect x="34" y="2" width="3" height="1.6" fill="#4e5a86"/><rect x="38" y="2" width="4" height="1.6" fill="#4e5a86"/><rect x="43" y="2" width="5" height="1.6" fill="#4e5a86"/><rect x="0" y="4" width="4" height="1.6" fill="#6fb8d0"/><rect x="4" y="4" width="1" height="1.6" fill="#c06a9e"/><rect x="6" y="4" width="25" height="1.6" fill="#c09460"/><rect x="32" y="4" width="1" height="1.6" fill="#4e5a86"/><rect x="34" y="4" width="4" height="1.6" fill="#4e5a86"/><rect x="39" y="4" width="2" height="1.6" fill="#4e5a86"/><rect x="42" y="4" width="4" height="1.6" fill="#4e5a86"/><rect x="47" y="4" width="9" height="1.6" fill="#4e5a86"/><rect x="0" y="6" width="11" height="1.6" fill="#6fb8d0"/><rect x="11" y="6" width="1" height="1.6" fill="#c06a9e"/><rect x="13" y="6" width="8" height="1.6" fill="#c0c47a"/><rect x="22" y="6" width="13" height="1.6" fill="#c0c47a"/><rect x="36" y="6" width="1" height="1.6" fill="#4e5a86"/><rect x="38" y="6" width="11" height="1.6" fill="#4e5a86"/><rect x="50" y="6" width="4" height="1.6" fill="#4e5a86"/><rect x="55" y="6" width="3" height="1.6" fill="#4e5a86"/><rect x="59" y="6" width="6" height="1.6" fill="#4e5a86"/><rect x="66" y="6" width="7" height="1.6" fill="#4e5a86"/><rect x="0" y="8" width="12" height="1.6" fill="#6fb8d0"/><rect x="12" y="8" width="1" height="1.6" fill="#c06a9e"/><rect x="14" y="8" width="2" height="1.6" fill="#9a80c8"/><rect x="17" y="8" width="1" height="1.6" fill="#4e5a86"/><rect x="19" y="8" width="8" height="1.6" fill="#4e5a86"/><rect x="28" y="8" width="6" height="1.6" fill="#4e5a86"/><rect x="35" y="8" width="5" height="1.6" fill="#4e5a86"/><rect x="41" y="8" width="3" height="1.6" fill="#4e5a86"/><rect x="45" y="8" width="3" height="1.6" fill="#4e5a86"/><rect x="49" y="8" width="4" height="1.6" fill="#4e5a86"/><rect x="54" y="8" width="5" height="1.6" fill="#4e5a86"/><rect x="60" y="8" width="6" height="1.6" fill="#4e5a86"/><rect x="67" y="8" width="1" height="1.6" fill="#4e5a86"/><rect x="69" y="8" width="4" height="1.6" fill="#4e5a86"/><rect x="74" y="8" width="5" height="1.6" fill="#4e5a86"/><rect x="80" y="8" width="6" height="1.6" fill="#4e5a86"/><rect x="0" y="10" width="16" height="1.6" fill="#4e5a86"/><rect x="0" y="12" width="15" height="1.6" fill="#6fb8d0"/><rect x="15" y="12" width="1" height="1.6" fill="#c06a9e"/><rect x="17" y="12" width="5" height="1.6" fill="#9a80c8"/><rect x="23" y="12" width="1" height="1.6" fill="#4e5a86"/><rect x="25" y="12" width="8" height="1.6" fill="#4e5a86"/><rect x="34" y="12" width="6" height="1.6" fill="#4e5a86"/><rect x="41" y="12" width="5" height="1.6" fill="#4e5a86"/><rect x="47" y="12" width="3" height="1.6" fill="#4e5a86"/><rect x="51" y="12" width="7" height="1.6" fill="#4e5a86"/><rect x="59" y="12" width="2" height="1.6" fill="#4e5a86"/><rect x="62" y="12" width="4" height="1.6" fill="#4e5a86"/><rect x="67" y="12" width="7" height="1.6" fill="#4e5a86"/><rect x="75" y="12" width="6" height="1.6" fill="#4e5a86"/><rect x="82" y="12" width="4" height="1.6" fill="#4e5a86"/><rect x="0" y="14" width="6" height="1.6" fill="#4e5a86"/><rect x="0" y="16" width="18" height="1.6" fill="#6fb8d0"/><rect x="18" y="16" width="1" height="1.6" fill="#c06a9e"/><rect x="20" y="16" width="4" height="1.6" fill="#9a80c8"/><rect x="25" y="16" width="1" height="1.6" fill="#4e5a86"/><rect x="27" y="16" width="8" height="1.6" fill="#4e5a86"/><rect x="36" y="16" width="6" height="1.6" fill="#4e5a86"/><rect x="43" y="16" width="5" height="1.6" fill="#4e5a86"/><rect x="49" y="16" width="3" height="1.6" fill="#4e5a86"/><rect x="53" y="16" width="7" height="1.6" fill="#4e5a86"/><rect x="61" y="16" width="3" height="1.6" fill="#4e5a86"/><rect x="65" y="16" width="6" height="1.6" fill="#4e5a86"/><rect x="72" y="16" width="6" height="1.6" fill="#4e5a86"/><rect x="0" y="18" width="3" height="1.6" fill="#a9aab0"/><rect x="0" y="22" width="4" height="1.6" fill="#a9aab0"/><rect x="5" y="22" width="2" height="1.6" fill="#a9aab0"/><rect x="8" y="22" width="3" height="1.6" fill="#a9aab0"/><rect x="12" y="22" width="4" height="1.6" fill="#a9aab0"/><rect x="17" y="22" width="10" height="1.6" fill="#a9aab0"/><rect x="0" y="26.5" width="86" height="1" fill="#2d5f78"/></svg>
  <!-- editor scrollbar -->
  <div class="a" style="left:946px;top:87px;width:14px;height:474px;background:#4a4b52"></div>
  <div class="a" style="left:946px;top:561px;width:1px;height:181px;background:#1f2029"></div>
  <div class="a" style="left:946px;top:265px;width:14px;height:2px;background:#8a8b93"></div>
  <!-- mouse ibeam -->
  <svg style="left:765px;top:389px" width="16" height="25" viewBox="0 0 16 25"><path d="M1 1.5 H6.5 Q8 1.5 8 3 V21.5 Q8 23 6.5 23 H1 M15 1.5 H9.5 Q8 1.5 8 3 M8 21.5 Q8 23 9.5 23 H15" stroke="#000" stroke-width="3" fill="none"/><path d="M1 1.5 H6.5 Q8 1.5 8 3 V21.5 Q8 23 6.5 23 H1 M15 1.5 H9.5 Q8 1.5 8 3 M8 21.5 Q8 23 9.5 23 H15" stroke="#fff" stroke-width="1.3" fill="none"/></svg>

  <div id="panel"></div>
  <div class="a pt" style="left:70px;top:755px">PROBLEMS</div>
  <div class="a pt" style="left:147px;top:755px">OUTPUT</div>
  <div class="a pt" style="left:213px;top:755px;color:#f8f8f2">TERMINAL</div>
  <div class="a pt" style="left:288px;top:755px">DEBUG CONSOLE</div>
  <div class="a" style="left:211px;top:776px;width:55px;height:1px;background:#ff79c6"></div>
  <!-- panel actions -->
  <svg style="left:756px;top:752px" width="200" height="18" viewBox="0 0 200 18" fill="none" stroke="#f8f8f2" stroke-width="1.1">
    <path d="M3 2.5 H16 L14 15.5 H1 Z M5 6 L8 8.5 L5 11 M8.5 12 H11.5"/>
    <path d="M63 3 V15 M57 9 H69" stroke-width="1.3"/>
    <path d="M77 7.5 L80 10.5 L83 7.5"/>
    <rect x="97.5" y="2.5" width="12" height="13"/><path d="M103.5 2.5 V15.5"/>
    <path d="M121 5 H133 M124 5 V3 H130 V5 M122.5 5 L123.5 16 H130.5 L131.5 5 M125.5 7 V14 M128.5 7 V14" stroke="#f8f8f2"/>
    <path d="M149 11.5 L154 6.5 L159 11.5"/>
    <path d="M176 5 L184 13 M184 5 L176 13"/>
  </svg>
  <div class="a" id="hugo" style="left:777px;top:753px;font-size:12.5px;color:#f8f8f2">hugo</div>

  <div id="term" class="mono a" style="left:68px;top:787px">Change detected, rebuilding site.<br>2021-08-20 10:39:28.908 -0500<br>Source changed "C:\\Users\\dahls\\source\\demos\\samplesite\\content\\post\\some-new-post.md": WRITE<br>Total in 46 ms<br><br>Change detected, rebuilding site.<br>2021-08-20 10:40:44.401 -0500<br>Source changed "C:\\Users\\dahls\\source\\demos\\samplesite\\content\\post\\some-new-post.md": WRITE<br>Total in 23 ms<br><br>Change detected, rebuilding site.<br>2021-08-20 10:40:50.409 -0500<br>Source changed "C:\\Users\\dahls\\source\\demos\\samplesite\\content\\post\\some-new-post.md": WRITE<br>Total in 88 ms</div>
  <div class="a" style="left:68px;top:1039px;width:9px;height:17px;border:1px solid #f8f8f2"></div>

  <div id="status"></div>
  <div class="a" style="left:0;top:1058px;width:34px;height:20px;background:#bd93f9"></div>
  <svg style="left:0;top:1058px" width="34" height="20" viewBox="0 0 34 20"><path d="M21.1 5 L17.5 8.7 L21.1 12.5 M13 9 L16.7 12.5 L13.3 16.2" stroke="#4a3a66" fill="none" stroke-width="1"/></svg>
  <svg style="left:42px;top:1062px" width="100" height="14" viewBox="0 0 100 14" fill="none" stroke="#f8f8f2" stroke-width="1.1">
    <circle cx="6.5" cy="7" r="5.8"/><path d="M4.3 4.8 L8.7 9.2 M8.7 4.8 L4.3 9.2"/>
    <path d="M34.5 1.5 L40.5 12.5 H28.5 Z M34.5 5 V9 M34.5 10.3 V11.3"/>
    <path d="M112 0" />
  </svg>
  <div class="a st" style="left:59px;top:1063px">0</div>
  <div class="a st" style="left:87px;top:1063px">0</div>
  <svg style="left:108px;top:1061px" width="15" height="15" viewBox="0 0 15 15" fill="none" stroke="#f8f8f2" stroke-width="1.2"><path d="M2 9 Q2.5 4 9 4 V1.5 L13.5 5.5 L9 9.5 V7 Q5 7 2 9"/><circle cx="5" cy="11.5" r="2.2"/></svg>
  <div class="a st" style="left:126px;top:1063px">Live Share</div>
  <svg style="left:196px;top:1062px" width="13" height="13" viewBox="0 0 13 13" fill="none" stroke="#f8f8f2" stroke-width="1"><rect x="1" y="0.5" width="11" height="3.5"/><rect x="1" y="4.5" width="11" height="3.5"/><rect x="1" y="8.5" width="11" height="3.5"/><path d="M2.5 2.2 H4 M2.5 6.2 H4 M2.5 10.2 H4"/></svg>
  <div class="a st" style="left:212px;top:1063px">Select Postgres Server</div>
  <div class="a st" style="left:611px;top:1063px">Ln 12, Col 1</div>
  <div class="a st" style="left:688px;top:1063px">Spaces: 2</div>
  <div class="a st" style="left:753px;top:1063px">UTF-8</div>
  <div class="a st" style="left:801px;top:1063px">LF</div>
  <div class="a st" style="left:828px;top:1063px">Markdown</div>
  <svg style="left:900px;top:1061px" width="50" height="16" viewBox="0 0 50 16" fill="none" stroke="#f8f8f2" stroke-width="1.1">
    <path d="M5 4.5 V1.5 H16.5 V8.5 H13 L11 10.5"/><circle cx="6" cy="7.5" r="2.6"/><path d="M1.5 14.5 Q2 10.8 6 10.8 Q10 10.8 10.5 14.5"/>
    <path d="M34 13 H44 Q42.5 11.5 42.5 9 V7 Q42.5 3.5 39 3.5 Q35.5 3.5 35.5 7 V9 Q35.5 11.5 34 13 Z M38 14.5 H40"/>
    <circle cx="44" cy="3.5" r="2.6" fill="#f8f8f2" stroke="#191a21" stroke-width="0.8"/>
  </svg>
</div>
<div id="taskline"></div>
</body></html>
